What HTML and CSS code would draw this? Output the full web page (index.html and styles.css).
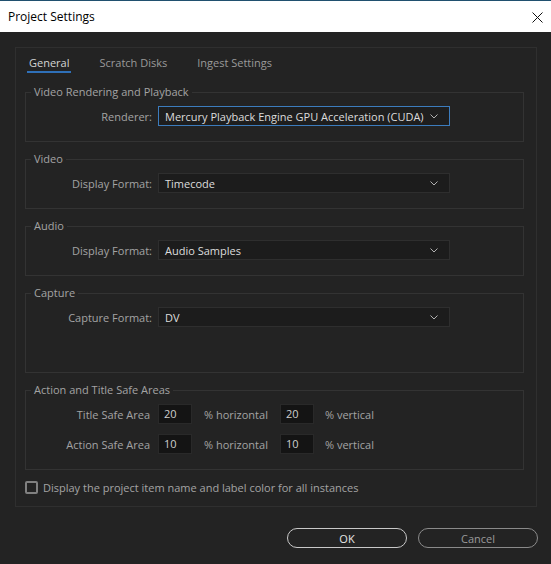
FILE: index.html
```html
<!DOCTYPE html>
<html>
<head>
<meta charset="utf-8">
<title>Project Settings</title>
<link rel="stylesheet" href="styles.css">
</head>
<body>
<div class="window">
  <div class="titlebar">
    <span class="title">Project Settings</span>
    <svg class="close" width="11" height="11" viewBox="0 0 11 11"><path d="M0.5 0.5 L10.5 10.5 M10.5 0.5 L0.5 10.5" stroke="#111" stroke-width="1" fill="none"/></svg>
  </div>
  <div class="body">
    <div class="panel">
      <div class="tabs">
        <span class="tab active">General</span>
        <span class="tab">Scratch Disks</span>
        <span class="tab">Ingest Settings</span>
      </div>

      <fieldset class="group">
        <legend>Video Rendering and Playback</legend>
        <div class="row">
          <span class="label">Renderer:</span>
          <div class="select focused"><span>Mercury Playback Engine GPU Acceleration (CUDA)</span><svg class="chev" width="8" height="5" viewBox="0 0 8 5"><path d="M0.5 0.5 L4 4 L7.5 0.5" stroke="#b0b0b0" fill="none"/></svg></div>
        </div>
      </fieldset>

      <fieldset class="group">
        <legend>Video</legend>
        <div class="row">
          <span class="label">Display Format:</span>
          <div class="select"><span>Timecode</span><svg class="chev" width="8" height="5" viewBox="0 0 8 5"><path d="M0.5 0.5 L4 4 L7.5 0.5" stroke="#b0b0b0" fill="none"/></svg></div>
        </div>
      </fieldset>

      <fieldset class="group">
        <legend>Audio</legend>
        <div class="row">
          <span class="label">Display Format:</span>
          <div class="select"><span>Audio Samples</span><svg class="chev" width="8" height="5" viewBox="0 0 8 5"><path d="M0.5 0.5 L4 4 L7.5 0.5" stroke="#b0b0b0" fill="none"/></svg></div>
        </div>
      </fieldset>

      <fieldset class="group tall">
        <legend>Capture</legend>
        <div class="row">
          <span class="label">Capture Format:</span>
          <div class="select"><span>DV</span><svg class="chev" width="8" height="5" viewBox="0 0 8 5"><path d="M0.5 0.5 L4 4 L7.5 0.5" stroke="#b0b0b0" fill="none"/></svg></div>
        </div>
      </fieldset>

      <fieldset class="group safe">
        <legend>Action and Title Safe Areas</legend>
        <div class="srow">
          <span class="slabel">Title Safe Area</span>
          <span class="num">20</span>
          <span class="pct">% horizontal</span>
          <span class="num">20</span>
          <span class="pct2">% vertical</span>
        </div>
        <div class="srow">
          <span class="slabel">Action Safe Area</span>
          <span class="num">10</span>
          <span class="pct">% horizontal</span>
          <span class="num">10</span>
          <span class="pct2">% vertical</span>
        </div>
      </fieldset>

      <div class="check">
        <span class="box"></span>
        <span>Display the project item name and label color for all instances</span>
      </div>
    </div>
    <div class="buttons">
      <span class="btn ok">OK</span>
      <span class="btn cancel">Cancel</span>
    </div>
  </div>
</div>
</body>
</html>
```

FILE: styles.css
```css
html, body {
  margin: 0;
  padding: 0;
}
body {
  width: 551px;
  height: 564px;
  background: #232323;
  font-family: "Open Sans", "Noto Sans", sans-serif;
  font-size: 11px;
  overflow: hidden;
}
.window {
  display: flex;
  flex-direction: column;
  height: 564px;
}
.titlebar {
  height: 31px;
  border-top: 1px solid #20506f;
  background: #ffffff;
  display: flex;
  align-items: center;
  justify-content: space-between;
  padding: 0 8px 0 8px;
}
.title {
  font-size: 12px;
  color: #000;
}
.close {
  display: block;
  margin-top: 1px;
}
.body {
  flex: 1;
  padding: 15px 0 0 15px;
  display: flex;
  flex-direction: column;
}
.panel {
  height: 458px;
  border: 1px solid #2f2f2f;
  padding: 0 12px 0 9px;
  box-sizing: content-box;
  width: 499px;
  display: flex;
  flex-direction: column;
}
.tabs {
  display: flex;
  gap: 26px;
  margin-left: 2px;
  margin-bottom: 12px;
}
.tab {
  padding: 7px 2px 1px 2px;
  line-height: 15px;
  color: #9a9a9a;
  border-bottom: 2px solid transparent;
}
.tab.active {
  color: #d4d4d4;
  border-bottom-color: #2f70b8;
}
.group {
  margin: 0 0 10px 0;
  padding: 7px 0 15px 0;
  border: 1px solid #333333;
  min-width: 0;
}
.group legend {
  margin-left: 5px;
  padding: 0 3px;
  line-height: 14px;
  color: #a3a3a3;
}
.group.tall {
  padding-bottom: 45px;
}
.row {
  display: grid;
  grid-template-columns: 126px 292px;
  column-gap: 6px;
  align-items: center;
}
.label {
  text-align: right;
  color: #a3a3a3;
}
.select {
  height: 20px;
  box-sizing: border-box;
  border: 1px solid #2e2e2e;
  background: #1c1c1c;
  display: flex;
  align-items: center;
  justify-content: space-between;
  padding: 0 6px 0 6px;
  color: #dcdcdc;
}
.select.focused {
  border-color: #3c7cbd;
  background: #1e1e1e;
}
.chev {
  display: block;
  margin-right: 5px;
}
.safe {
  display: block;
}
.srow {
  display: flex;
  align-items: center;
  height: 20px;
  color: #a3a3a3;
}
.srow + .srow {
  margin-top: 10px;
}
.slabel {
  width: 124px;
  padding-right: 8px;
  text-align: right;
}
.num {
  width: 34px;
  height: 20px;
  box-sizing: border-box;
  border: 1px solid #292929;
  background: #141414;
  color: #cfcfcf;
  padding-left: 5px;
  line-height: 18px;
}
.pct {
  width: 64px;
  margin-left: 12px;
  margin-right: 12px;
}
.pct2 {
  margin-left: 11px;
}
.check {
  display: flex;
  align-items: center;
  gap: 5px;
  margin-top: 0;
  color: #a3a3a3;
}
.box {
  width: 13px;
  height: 13px;
  box-sizing: border-box;
  border: 2px solid #808080;
  border-radius: 2px;
}
.buttons {
  display: flex;
  justify-content: flex-end;
  gap: 11px;
  margin-top: 21px;
  margin-right: 13px;
}
.btn {
  width: 120px;
  height: 20px;
  box-sizing: border-box;
  border-radius: 10px;
  display: flex;
  align-items: center;
  justify-content: center;
}
.ok {
  border: 1.5px solid #c8c8c8;
  color: #e6e6e6;
}
.cancel {
  border: 1.5px solid #8a8a8a;
  color: #9a9a9a;
}
```
